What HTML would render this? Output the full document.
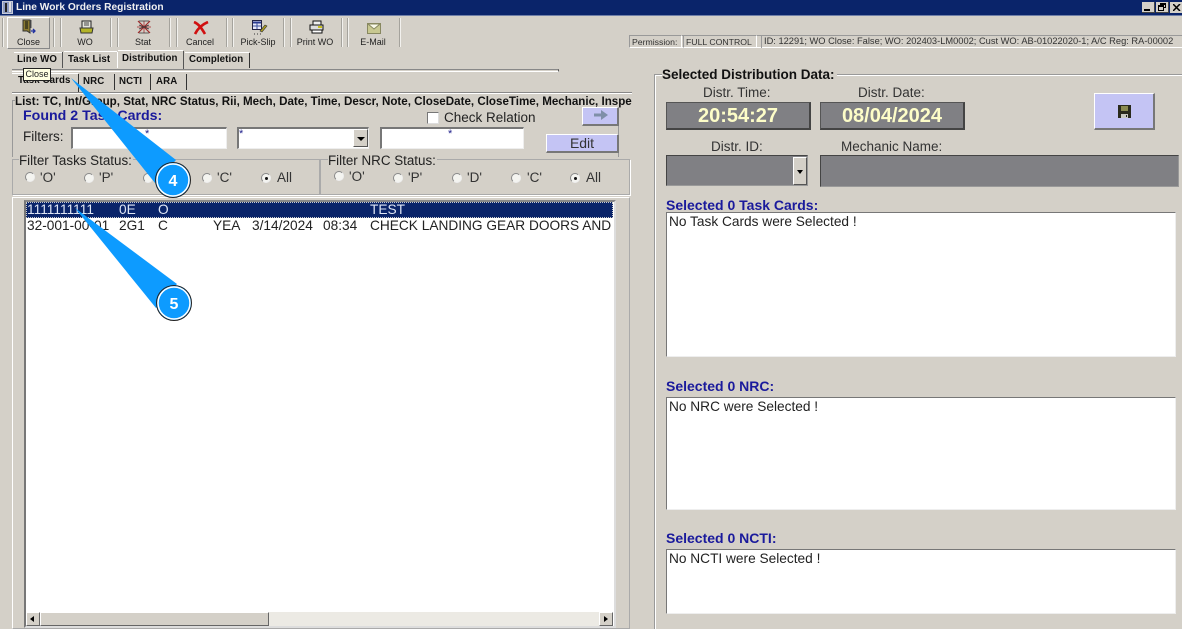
<!DOCTYPE html>
<html><head><meta charset="utf-8"><style>
html,body{margin:0;padding:0}
body{width:1182px;height:629px;overflow:hidden;background:#d4d0c8;position:relative;font-family:"Liberation Sans",sans-serif;color:#111}
div,span{position:absolute;box-sizing:border-box;white-space:nowrap}
svg{position:absolute}
.t{font-size:13.5px;line-height:16px;color:#222}
.tb{font-size:9px;line-height:11px;color:#222;text-align:center;top:37px}
.sep{top:18px;width:2px;height:29px;border-left:1px solid #a5a39d;border-right:1px solid #f2f1ee}
.tab{font-size:9.7px;font-weight:bold;line-height:12px;color:#111;letter-spacing:.1px}
.sunk{border-top:2px solid #777;border-left:2px solid #777;border-right:1px solid #eee;border-bottom:1px solid #eee;background:#fff}
.lav{background:#c4c4f4;border-top:1px solid #fff;border-left:1px solid #fff;border-right:2px solid #777;border-bottom:2px solid #777}
.gb{border:1px solid #aaa;box-shadow:1px 1px 0 #fff}
.rd{width:10px;height:10px;border-radius:50%;background:#f4f4f0;border:1px solid #888;border-right-color:#eee;border-bottom-color:#eee}
.rd.on:after{content:"";position:absolute;left:2.5px;top:2.5px;width:3px;height:3px;border-radius:50%;background:#111}
.ar{font-size:13.5px;color:#333;line-height:14px}
.panel{background:#808084;border:1px solid #444;border-right-color:#999;border-bottom-color:#999}
.clock{font-size:20px;font-weight:bold;color:#fdfdc8;text-align:center;line-height:27px;background:#808084;border:1px solid #555;border-bottom:2px solid #444;border-right:2px solid #444}
.sel{font-size:14px;font-weight:bold;color:#1a1a9c;line-height:16px}
.memo{background:#fff;border:1px solid #777;border-right-color:#eee;border-bottom-color:#eee;font-size:13.7px;line-height:15px;color:#222;padding:1px 2px}
.row{font-size:13.7px;line-height:16px;height:16px}
</style></head><body>

<!-- title bar -->
<div style="left:0;top:0;width:1182px;height:15px;background:#0a246a"></div>
<div style="left:2px;top:1px;width:11px;height:13px;background:#8f9cc0;border:1px solid #c8ccd8"></div>
<div style="left:5px;top:3px;width:2px;height:9px;background:#222"></div>
<div style="left:9px;top:2px;width:2px;height:10px;background:#e0e0e0"></div>
<div style="left:16px;top:1px;font-size:10.200px;font-weight:bold;color:#f0f0f0;line-height:13px">Line Work Orders Registration</div>
<div style="left:1142px;top:2px;width:13px;height:11px;background:#d4d0c8;border-right:1px solid #444;border-bottom:1px solid #444"><div style="left:2px;top:7px;width:6px;height:2px;background:#000"></div></div>
<div style="left:1156px;top:2px;width:13px;height:11px;background:#d4d0c8;border-right:1px solid #444;border-bottom:1px solid #444"><div style="left:4px;top:1px;width:6px;height:5px;border:1px solid #000;border-top-width:2px"></div><div style="left:2px;top:3px;width:6px;height:6px;background:#d4d0c8;border:1px solid #000;border-top-width:2px"></div></div>
<div style="left:1170px;top:2px;width:12px;height:11px;background:#d4d0c8"><svg style="left:3px;top:2px" width="8" height="7" viewBox="0 0 8 7"><path d="M0 0l7 7M7 0L0 7" stroke="#000" stroke-width="1.500"/></svg></div>
<div style="left:0;top:15px;width:1182px;height:1px;background:#6f7fa8"></div>

<!-- toolbar -->
<div class="sep" style="left:2px"></div>
<div style="left:7px;top:17px;width:43px;height:32px;border:1px solid;border-color:#fff #888 #888 #fff"></div>
<div class="sep" style="left:53px"></div>
<div class="sep" style="left:60px"></div>
<div class="sep" style="left:110px"></div>
<div class="sep" style="left:117px"></div>
<div class="sep" style="left:169px"></div>
<div class="sep" style="left:176px"></div>
<div class="sep" style="left:226px"></div>
<div class="sep" style="left:232px"></div>
<div class="sep" style="left:283px"></div>
<div class="sep" style="left:290px"></div>
<div class="sep" style="left:341px"></div>
<div class="sep" style="left:347px"></div>
<div class="sep" style="left:399px"></div>

<svg style="left:22px;top:19px" width="15" height="16" viewBox="0 0 15 16"><path d="M1 1h7v13L5 12H1z" fill="#8a7a30" stroke="#333"/><path d="M3 2h3v8H3z" fill="#4a4420"/><path d="M9 1v8" stroke="#555"/><path d="M9 12h4M11 10l2 2-2 2" fill="none" stroke="#2030a0" stroke-width="1.300"/></svg>
<svg style="left:79px;top:20px" width="15" height="14" viewBox="0 0 15 14"><path d="M3 1h9v7H3z" fill="#e4e4dc" stroke="#222"/><path d="M5 3h5M5 5h5" stroke="#444"/><path d="M1 8h13l-1 5H2z" fill="#b4b428" stroke="#333"/></svg>
<svg style="left:136px;top:20px" width="16" height="14" viewBox="0 0 16 14"><path d="M2 1l12 12M14 1L2 13" stroke="#a02828" stroke-width="1.200"/><path d="M8 1v12M1 7h14" stroke="#b05050"/><path d="M3 1h10M3 13h10M3 5l10 4M13 5L3 9" stroke="#333" stroke-width=".8"/></svg>
<svg style="left:193px;top:21px" width="16" height="14" viewBox="0 0 16 14"><path d="M1 1c5 2 8 7 11 12M15 1C10 3 5 7 2 13" fill="none" stroke="#d01010" stroke-width="2.600"/></svg>
<svg style="left:252px;top:20px" width="16" height="16" viewBox="0 0 16 16"><path d="M.5.500h9v9h-9z" fill="#e8e8f8" stroke="#224"/><path d="M1 2.500h8" stroke="#2a3a90" stroke-width="2"/><path d="M1 6h8M5 3v6" stroke="#3a50a0"/><path d="M8 11l5-6 2 1-5 6z" fill="#b0a020" stroke="#333" stroke-width=".6"/><path d="M2 14h1M5 14h1M8 14h1" stroke="#333"/></svg>
<svg style="left:309px;top:20px" width="15" height="14" viewBox="0 0 15 14"><path d="M4 1h8v4H4z" fill="#eee" stroke="#111"/><path d="M1 5h13v5H1z" fill="#ddd" stroke="#111"/><path d="M3 10h10v3H3z" fill="#fff" stroke="#111"/><path d="M9 7h4" stroke="#c8c020" stroke-width="2"/></svg>
<svg style="left:367px;top:23px" width="14" height="11" viewBox="0 0 14 11"><path d="M.5.500h13v10H.5z" fill="#c8c890" stroke="#888860"/><path d="M1 1l6 5 6-5z" fill="#f8f8e8" stroke="#888860"/></svg>

<div class="tb" style="left:7px;width:43px">Close</div>
<div class="tb" style="left:60px;width:50px">WO</div>
<div class="tb" style="left:118px;width:50px">Stat</div>
<div class="tb" style="left:175px;width:50px">Cancel</div>
<div class="tb" style="left:232px;width:52px">Pick-Slip</div>
<div class="tb" style="left:290px;width:50px">Print WO</div>
<div class="tb" style="left:348px;width:50px">E-Mail</div>

<!-- status -->
<div style="left:629px;top:35px;width:553px;height:13px;border-top:1px solid #999;border-bottom:1px solid #fff"></div>
<div style="left:629px;top:35px;width:53px;height:13px;border:1px solid;border-color:#999 #fff #fff #999;font-size:8.700px;line-height:12px;padding-left:2px;color:#333">Permission:</div>
<div style="left:683px;top:35px;width:74px;height:13px;border:1px solid;border-color:#999 #fff #fff #999;font-size:8.700px;line-height:12px;padding-left:2px;color:#333">FULL CONTROL</div>
<div style="left:761px;top:35px;width:421px;height:13px;border-left:1px solid #999;font-size:9.300px;line-height:12px;padding-left:2px;color:#333">ID: 12291; WO Close: False; WO: 202403-LM0002; Cust WO: AB-01022020-1; A/C Reg: RA-00002</div>

<!-- main tabs -->
<div style="left:12px;top:69px;width:547px;height:3px;border-top:1px solid #888;border-bottom:1px solid #fff;border-right:1px solid #555;background:#d4d0c8"></div>
<div style="left:14px;top:52px;width:48px;height:1px;background:#fff"></div>
<div style="left:64px;top:51px;width:53px;height:1px;background:#fff"></div>
<div style="left:118px;top:50px;width:65px;height:1px;background:#fff"></div>
<div style="left:185px;top:52px;width:64px;height:1px;background:#fff"></div>
<div class="tab" style="left:17px;top:54px">Line WO</div>
<div style="left:62px;top:52px;width:1px;height:16px;background:#555"></div>
<div class="tab" style="left:68px;top:54px">Task List</div>
<div style="left:117px;top:52px;width:1px;height:16px;background:#fff"></div>
<div class="tab" style="left:122px;top:53px">Distribution</div>
<div style="left:183px;top:51px;width:1px;height:18px;background:#555"></div>
<div class="tab" style="left:189px;top:54px">Completion</div>
<div style="left:249px;top:53px;width:1px;height:15px;background:#333"></div>

<!-- sub tabs -->
<div style="left:12px;top:92px;width:620px;height:2px;border-top:1px solid #888;border-bottom:1px solid #fff"></div>
<div style="left:12px;top:73px;width:66px;height:1px;background:#fff"></div>
<div class="tab" style="left:18px;top:75px">Task Cards</div>
<div style="left:78px;top:74px;width:1px;height:18px;background:#333"></div>
<div class="tab" style="left:83px;top:76px">NRC</div>
<div style="left:114px;top:74px;width:1px;height:16px;background:#333"></div>
<div class="tab" style="left:119px;top:76px">NCTI</div>
<div style="left:150px;top:74px;width:1px;height:16px;background:#333"></div>
<div class="tab" style="left:156px;top:76px">ARA</div>
<div style="left:186px;top:74px;width:1px;height:16px;background:#333"></div>

<!-- list group -->
<div style="left:12px;top:100px;width:607px;height:57px;border-left:1px solid #999;border-right:1px solid #999;border-top:1px solid #999"></div>
<div style="left:15px;top:95px;width:617px;overflow:hidden;background:#d4d0c8;font-size:11.600px;font-weight:bold;line-height:13px;color:#111;height:13px">List: TC, Int/Group, Stat, NRC Status, Rii, Mech, Date, Time, Descr, Note, CloseDate, CloseTime, Mechanic, Inspector</div>
<div style="left:23px;top:108px;font-size:14.200px;font-weight:bold;color:#1a1a9c;line-height:16px">Found 2 Task Cards:</div>
<div class="t" style="left:23px;top:129px">Filters:</div>
<div class="sunk" style="left:71px;top:127px;width:156px;height:22px"></div>
<div style="left:145px;top:129px;color:#22228c;font-size:11px;line-height:11px">*</div>
<div class="sunk" style="left:237px;top:127px;width:132px;height:22px"></div>
<div style="left:239px;top:129px;color:#22228c;font-size:11px;line-height:11px">*</div>
<div style="left:353px;top:129px;width:15px;height:18px;background:#d4d0c8;border:1px solid;border-color:#fff #555 #555 #fff"></div>
<div style="left:357px;top:137px;border-left:4px solid transparent;border-right:4px solid transparent;border-top:4px solid #000"></div>
<div class="sunk" style="left:380px;top:127px;width:144px;height:22px"></div>
<div style="left:448px;top:129px;color:#22228c;font-size:11px;line-height:11px">*</div>
<div style="left:427px;top:112px;width:12px;height:12px;background:#fff;border:1px solid;border-color:#777 #ddd #ddd #777"></div>
<div class="t" style="left:444px;top:110px">Check Relation</div>
<div class="lav" style="left:582px;top:107px;width:37px;height:19px"></div>
<svg style="left:593px;top:109px" width="16" height="12" viewBox="0 0 16 12"><path d="M1 4.500h7V1l7 5-7 5V7.500H1z" fill="#7f8fa8"/></svg>
<div class="lav" style="left:546px;top:134px;width:73px;height:19px;font-size:14px;line-height:17px;text-align:center;color:#333">Edit</div>

<!-- filter groups -->
<div class="gb" style="left:12px;top:159px;width:308px;height:36px"></div>
<div class="gb" style="left:320px;top:159px;width:310px;height:36px"></div>
<div class="t" style="left:19px;top:153px;background:#d4d0c8;padding:0 1px 0 0;font-size:13.400px">Filter Tasks Status:</div>
<div class="t" style="left:328px;top:153px;background:#d4d0c8;padding-right:1px;font-size:13.400px">Filter NRC Status:</div>

<div class="rd" style="left:25px;top:172px"></div><div class="ar" style="left:40px;top:171px">'O'</div>
<div class="rd" style="left:84px;top:173px"></div><div class="ar" style="left:99px;top:171px">'P'</div>
<div class="rd" style="left:143px;top:173px"></div>
<div class="rd" style="left:202px;top:173px"></div><div class="ar" style="left:217px;top:171px">'C'</div>
<div class="rd on" style="left:261px;top:173px"></div><div class="ar" style="left:277px;top:171px">All</div>

<div class="rd" style="left:334px;top:171px"></div><div class="ar" style="left:349px;top:170px">'O'</div>
<div class="rd" style="left:393px;top:173px"></div><div class="ar" style="left:408px;top:171px">'P'</div>
<div class="rd" style="left:452px;top:173px"></div><div class="ar" style="left:467px;top:171px">'D'</div>
<div class="rd" style="left:511px;top:173px"></div><div class="ar" style="left:527px;top:171px">'C'</div>
<div class="rd on" style="left:570px;top:173px"></div><div class="ar" style="left:586px;top:171px">All</div>

<!-- list -->
<div style="left:12px;top:197px;width:618px;height:432px;border:1px solid;border-color:#fff #aaa #aaa #fff"></div>
<div style="left:24px;top:200px;width:592px;height:428px;background:#fff;border:2px solid;border-color:#888 #ddd #ddd #777"></div>
<div style="left:26px;top:202px;width:587px;height:16px;background:#0a246a;outline:1px dotted #ccc;outline-offset:-1px"></div>
<div class="row" style="left:27px;top:202px;color:#dfe6f5">1111111111</div>
<div class="row" style="left:119px;top:202px;color:#dfe6f5">0E</div>
<div class="row" style="left:158px;top:202px;color:#dfe6f5">O</div>
<div class="row" style="left:370px;top:202px;color:#dfe6f5">TEST</div>
<div class="row" style="left:27px;top:218px;color:#222">32-001-00-01</div>
<div class="row" style="left:119px;top:218px;color:#222">2G1</div>
<div class="row" style="left:158px;top:218px;color:#222">C</div>
<div class="row" style="left:213px;top:218px;color:#222">YEA</div>
<div class="row" style="left:252px;top:218px;color:#222">3/14/2024</div>
<div class="row" style="left:323px;top:218px;color:#222">08:34</div>
<div class="row" style="left:370px;top:218px;width:243px;overflow:hidden;color:#222">CHECK LANDING GEAR DOORS AND ATTACHMENTS</div>
<!-- scrollbar -->
<div style="left:26px;top:612px;width:587px;height:14px;background:#eceae4"></div>
<div style="left:26px;top:612px;width:14px;height:14px;background:#d4d0c8;border:1px solid;border-color:#fff #666 #666 #fff"></div>
<div style="left:30px;top:616px;border-top:3.500px solid transparent;border-bottom:3.500px solid transparent;border-right:4px solid #000"></div>
<div style="left:40px;top:612px;width:229px;height:14px;background:#d4d0c8;border:1px solid;border-color:#fff #666 #666 #fff"></div>
<div style="left:599px;top:612px;width:14px;height:14px;background:#d4d0c8;border:1px solid;border-color:#fff #666 #666 #fff"></div>
<div style="left:604px;top:616px;border-top:3.500px solid transparent;border-bottom:3.500px solid transparent;border-left:4px solid #000"></div>

<!-- right panel -->
<div style="left:654px;top:74px;width:528px;height:555px;border-left:1px solid #999;border-top:1px solid #999;box-shadow:inset 1px 1px 0 #fff"></div>
<div style="left:662px;top:67px;background:#d4d0c8;font-size:13.500px;font-weight:bold;line-height:16px;color:#111;padding-right:2px">Selected Distribution Data:</div>
<div class="t" style="left:703px;top:85px;color:#333">Distr. Time:</div>
<div class="t" style="left:858px;top:85px;color:#333">Distr. Date:</div>
<div class="clock" style="left:666px;top:102px;width:145px;height:28px">20:54:27</div>
<div class="clock" style="left:820px;top:102px;width:145px;height:28px">08/04/2024</div>
<div class="lav" style="left:1094px;top:93px;width:61px;height:37px"></div>
<svg style="left:1118px;top:105px" width="13" height="13" viewBox="0 0 13 13"><path d="M0 0h13v13H0z" fill="#2a2a1c"/><path d="M3 1h7v5H3z" fill="#8a8a50"/><path d="M3 9h7v4H3z" fill="#c8c8c0"/><path d="M8 10h1v2H8z" fill="#222"/></svg>

<div class="t" style="left:711px;top:139px;color:#333">Distr. ID:</div>
<div class="t" style="left:841px;top:139px;color:#333">Mechanic Name:</div>
<div class="panel" style="left:666px;top:155px;width:142px;height:31px"></div>
<div style="left:793px;top:157px;width:14px;height:28px;background:#d4d0c8;border:1px solid;border-color:#fff #555 #555 #fff"></div>
<div style="left:797px;top:170px;border-left:3.500px solid transparent;border-right:3.500px solid transparent;border-top:4px solid #000"></div>
<div class="panel" style="left:820px;top:155px;width:359px;height:32px"></div>

<div class="sel" style="left:666px;top:197px">Selected 0 Task Cards:</div>
<div class="memo" style="left:666px;top:212px;width:510px;height:145px">No Task Cards were Selected !</div>
<div class="sel" style="left:666px;top:378px">Selected 0 NRC:</div>
<div class="memo" style="left:666px;top:397px;width:510px;height:113px">No NRC were Selected !</div>
<div class="sel" style="left:666px;top:530px">Selected 0 NCTI:</div>
<div class="memo" style="left:666px;top:549px;width:510px;height:65px">No NCTI were Selected !</div>

<!-- callouts -->
<svg style="left:0;top:0" width="1182" height="629" viewBox="0 0 1182 629">
<path d="M71 78L176 160L155 183z" fill="#0d9bff"/>
<path d="M75 208L177 284L156 308z" fill="#0d9bff"/>
<circle cx="173" cy="180" r="17.500" fill="#0d9bff" stroke="#222" stroke-width="1"/>
<circle cx="173" cy="180" r="16" fill="none" stroke="#fff" stroke-width="1.500"/>
<circle cx="174" cy="303" r="17.500" fill="#0d9bff" stroke="#222" stroke-width="1"/>
<circle cx="174" cy="303" r="16" fill="none" stroke="#fff" stroke-width="1.500"/>
<text x="173" y="186" font-family="Liberation Sans" font-size="16" font-weight="bold" fill="#fff" text-anchor="middle">4</text>
<text x="174" y="309" font-family="Liberation Sans" font-size="16" font-weight="bold" fill="#fff" text-anchor="middle">5</text>
</svg>

<!-- tooltip -->
<div style="left:23px;top:68px;width:28px;height:13px;background:#ffffe1;border:1px solid #222;font-size:9px;line-height:11px;text-align:center;color:#222">Close</div>

</body></html>
